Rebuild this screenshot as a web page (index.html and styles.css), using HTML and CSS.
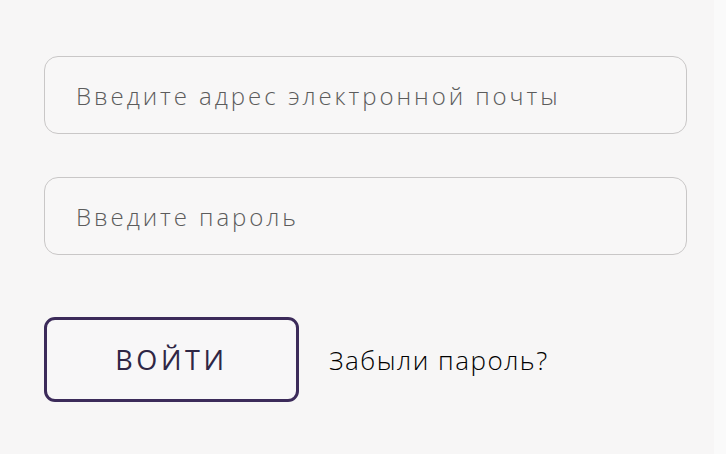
FILE: index.html
```html
<!DOCTYPE html>
<html lang="ru">
<head>
<meta charset="utf-8">
<title>Вход</title>
<link rel="stylesheet" href="styles.css">
</head>
<body>
<form class="login">
  <input class="field" type="email" placeholder="Введите адрес электронной почты">
  <input class="field" type="password" placeholder="Введите пароль">
  <div class="actions">
    <button class="btn" type="button">ВОЙТИ</button>
    <a class="forgot" href="#">Забыли пароль?</a>
  </div>
</form>
</body>
</html>
```
FILE: styles.css
```css
html, body {
  margin: 0;
  padding: 0;
  background: #f7f6f6;
  height: 100%;
}
body {
  font-family: "Open Sans", "DejaVu Sans", sans-serif;
  width: 726px;
  height: 454px;
  box-sizing: border-box;
  border-right: 12px solid #fafafa;
}
.login {
  display: flex;
  flex-direction: column;
  padding: 56px 0 0 44px;
}
.field {
  box-sizing: border-box;
  width: 643px;
  height: 78px;
  margin: 0 0 43px 0;
  padding: 0 0 0 31px;
  border: 1px solid #c9c7c7;
  border-radius: 14px;
  background: #f8f7f7;
  font-family: inherit;
  font-size: 24px;
  font-weight: 300;
  letter-spacing: 2.95px;
  color: #333;
  outline: none;
}
.field::placeholder {
  color: #5c5c5c;
}
.actions {
  display: flex;
  align-items: center;
  margin-top: 19px;
  gap: 30px;
}
.btn {
  box-sizing: border-box;
  width: 255px;
  height: 85px;
  border: 3px solid #3c2b5a;
  border-radius: 11px;
  background: #f8f7f8;
  font-family: inherit;
  font-size: 27px;
  letter-spacing: 3.6px;
  color: #2f2645;
  padding: 0;
}
.forgot {
  font-size: 26px;
  font-weight: 300;
  color: #000;
  text-decoration: none;
  letter-spacing: 1.5px;
}
```
